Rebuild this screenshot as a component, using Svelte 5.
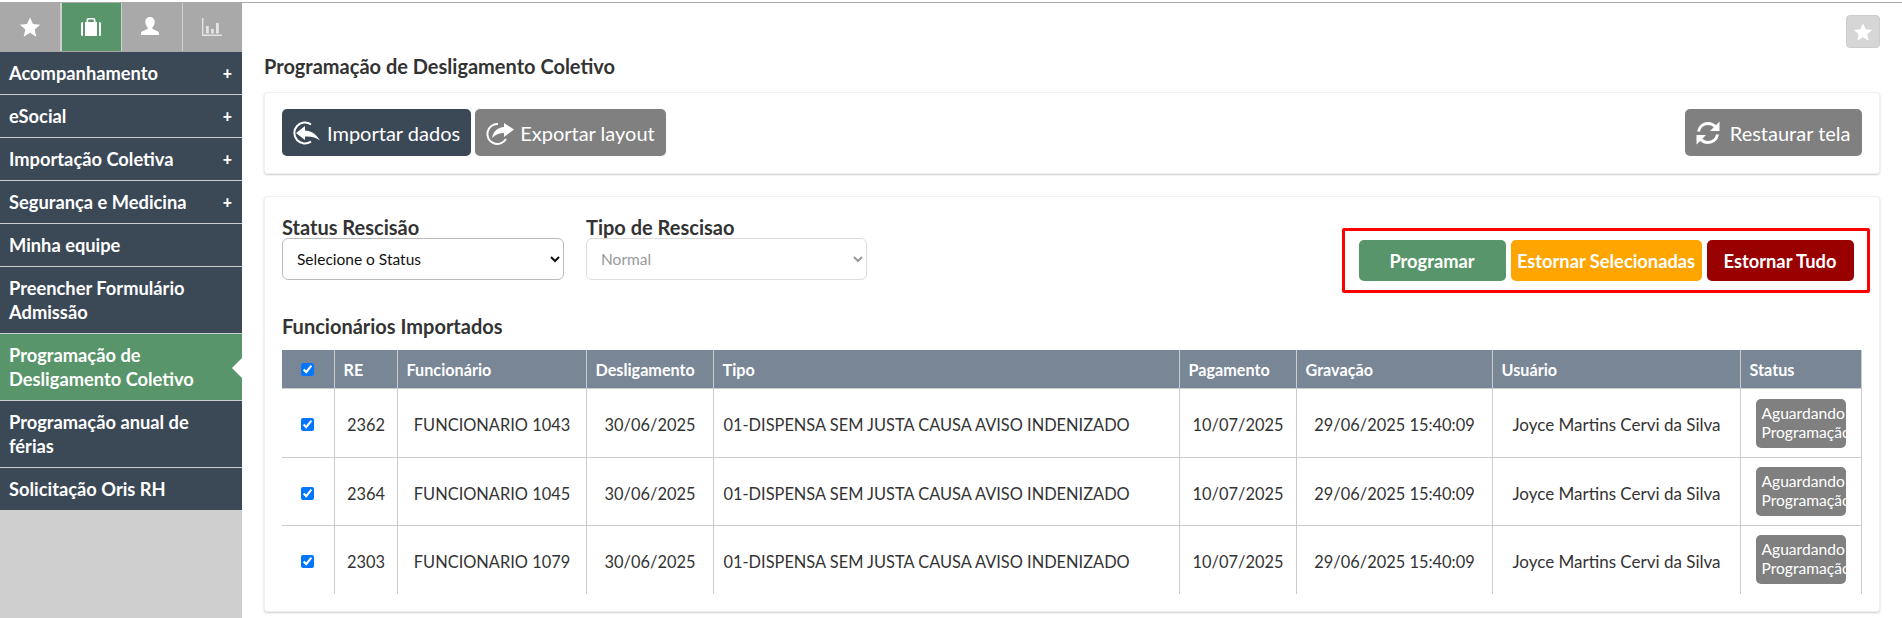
<script>
const tabs = [
  { id: 'star', active: false },
  { id: 'case', active: true },
  { id: 'user', active: false },
  { id: 'chart', active: false }
];

const menu = [
  { label: 'Acompanhamento', plus: true },
  { label: 'eSocial', plus: true },
  { label: 'Importação Coletiva', plus: true },
  { label: 'Segurança e Medicina', plus: true },
  { label: 'Minha equipe' },
  { label: 'Preencher Formulário Admissão' },
  { label: 'Programação de Desligamento Coletivo', active: true },
  { label: 'Programação anual de férias' },
  { label: 'Solicitação Oris RH' }
];

const rows = [
  { re: '2362', nome: 'FUNCIONARIO 1043' },
  { re: '2364', nome: 'FUNCIONARIO 1045' },
  { re: '2303', nome: 'FUNCIONARIO 1079' }
];
</script>

{#snippet star(size)}
  <svg width={size} height={size} viewBox="0 0 24 24"><path fill="#fff" d="M12 1.5l3.2 7.2 7.8.8-5.9 5.2 1.8 7.800-6.900-4.100-6.900 4.100 1.800-7.800L1 9.500l7.800-.8z"/></svg>
{/snippet}

<div class="topline"></div>
<div class="page">
  <aside class="sidebar">
    <div class="tabs">
      {#each tabs as tab}
        <div class="tab" class:on={tab.active}>
          {#if tab.id == 'star'}
            {@render star(22)}
          {:else if tab.id == 'case'}
            <svg width="22" height="22" viewBox="0 0 22 22"><path fill="#fff" d="M1 7.500q0-1.500 1.500-1.500H3v14h-.5Q1 20 1 18.500zM5 6h1.500V4q0-2 2-2h5q2 0 2 2v2H17v14H5zm3.200 0h5.600V4.200q0-.6-.6-.6H8.800q-.6 0-.6.6zM19 6h.5Q21 6 21 7.500v11q0 1.500-1.500 1.500H19z"/></svg>
          {:else if tab.id == 'user'}
            <svg class="user" width="24" height="22" viewBox="0 0 22 22"><path fill="#fff" d="M11 1c3 0 4.700 2.200 4.700 5 0 2.200-.9 4.300-2.200 5.300-.5.500-.3 1.500.5 1.900l5 2.300c1 .5 1 1.500 1 3.500H2c0-2 0-3 1-3.500l5-2.300c.8-.4 1-1.400.5-1.900C7.200 10.300 6.300 8.200 6.300 6 6.300 3.200 8 1 11 1z"/></svg>
          {:else}
            <svg width="22" height="22" viewBox="0 0 22 22"><path fill="#e4e4e4" d="M1 2h1.400v16.600H21V20H1zM5 10h2.800v7.500H5zM10 13h2.800v4.500H10zM15 7h2.800v10.500H15z"/></svg>
          {/if}
        </div>
      {/each}
    </div>
    <nav class="menu">
      {#each menu as item}
        <div class="item" class:active={item.active} class:wrap={!item.plus}>
          <span>{item.label}</span>
          {#if item.plus}<b class="plus">+</b>{/if}
          {#if item.active}<i class="arrow"></i>{/if}
        </div>
      {/each}
    </nav>
  </aside>

  <main class="content">
    <button class="fav" type="button">{@render star(20)}</button>
    <h1>Programação de Desligamento Coletivo</h1>

    <section class="card actions">
      <button class="btn dark" type="button">
        <svg width="30" height="26" viewBox="0 0 30 26"><path fill="none" stroke="#fff" stroke-width="2" d="M19 21.500A10.500 10.500 0 1 1 19 4.500"/><path fill="#fff" d="M4 13l9-7v4.500c6 0 11 3.500 15 10-4-3-9-4.500-15-4V20z"/></svg>
        Importar dados
      </button>
      <button class="btn gray" type="button">
        <svg width="30" height="26" viewBox="0 0 30 26"><path fill="none" stroke="#fff" stroke-width="2" d="M13 4a10 10 0 1 0 8 15"/><path fill="#fff" d="M29 9.500L19 3v4C13 7.500 8.500 11 7 18c3.500-3.500 7-5 12-5v4z"/></svg>
        Exportar layout
      </button>
      <button class="btn gray right" type="button">
        <svg width="26" height="26" viewBox="0 0 26 26"><path fill="none" stroke="#fff" stroke-width="3" d="M3.500 11.500C4.500 6.500 8.500 3.500 13 3.500c3.500 0 6 1.500 8 4M22.500 14.500c-1 5-5 8-9.500 8-3.500 0-6-1.500-8-4"/><path fill="#fff" d="M24.500 1.500V11h-9.500zM1.500 24.500V15h9.500z"/></svg>
        Restaurar tela
      </button>
    </section>

    <section class="card filters">
      <div class="filter-row">
        <div class="field">
          <label for="status">Status Rescisão</label>
          <select id="status">
            <option>Selecione o Status</option>
          </select>
        </div>
        <div class="field">
          <label for="tipo">Tipo de Rescisao</label>
          <select id="tipo" disabled>
            <option>Normal</option>
          </select>
        </div>
        <div class="highlight">
          <button class="act green" type="button">Programar</button>
          <button class="act orange" type="button">Estornar Selecionadas</button>
          <button class="act red" type="button">Estornar Tudo</button>
        </div>
      </div>

      <h2>Funcionários Importados</h2>

      <table>
        <colgroup>
          <col style="width:52px" />
          <col style="width:63px" />
          <col style="width:189px" />
          <col style="width:127px" />
          <col style="width:466px" />
          <col style="width:117px" />
          <col style="width:196px" />
          <col style="width:248px" />
          <col style="width:121px" />
        </colgroup>
        <thead>
          <tr>
            <th class="check"><input type="checkbox" checked /></th>
            <th>RE</th>
            <th>Funcionário</th>
            <th>Desligamento</th>
            <th>Tipo</th>
            <th>Pagamento</th>
            <th>Gravação</th>
            <th>Usuário</th>
            <th>Status</th>
          </tr>
        </thead>
        <tbody>
          {#each rows as row}
            <tr>
              <td class="check"><input type="checkbox" checked /></td>
              <td class="mid">{row.re}</td>
              <td class="mid">{row.nome}</td>
              <td class="mid">30/06/2025</td>
              <td>01-DISPENSA SEM JUSTA CAUSA AVISO INDENIZADO</td>
              <td class="mid">10/07/2025</td>
              <td class="mid">29/06/2025 15:40:09</td>
              <td class="mid usuario">Joyce Martins Cervi da Silva</td>
              <td class="mid"><span class="badge">Aguardando Programação</span></td>
            </tr>
          {/each}
        </tbody>
      </table>
    </section>
  </main>
</div>

<style>
  :global(body) {
    background: #fff;
    font-family: "Lato", "Open Sans", sans-serif;
    color: #333;
  }
  .topline {
    height: 3px;
    box-sizing: border-box;
    border-bottom: 1px solid #aaa;
  }
  .page {
    display: flex;
    height: 615px;
    overflow: hidden;
  }
  .sidebar {
    width: 242px;
    flex: none;
    background: #cfcfcf;
  }
  .tabs {
    display: flex;
    height: 49px;
    background: #a9a9a9;
  }
  .tab {
    flex: 1;
    display: flex;
    align-items: center;
    justify-content: center;
    border-right: 1px solid #d0d0d0;
    height: 48px;
  }
  .tab:last-child {
    border-right: none;
  }
  .tab.on {
    background: #58956a;
    border-left: 1px solid #d0d0d0;
  }
  .user {
    margin-right: 4px;
  }
  .item {
    position: relative;
    display: flex;
    justify-content: space-between;
    align-items: center;
    box-sizing: border-box;
    min-height: 43px;
    padding: 9px;
    background: #3b4856;
    color: #fff;
    font-size: 18.300px;
    font-weight: 700;
    line-height: 24px;
    border-bottom: 1px solid #ccc;
  }
  .item.wrap {
    padding-right: 24px;
  }
  .item:last-child {
    min-height: 42px;
    border-bottom: none;
  }
  .item.active {
    background: #58956a;
  }
  .plus {
    margin-right: 1px;
    font-size: 16px;
  }
  .arrow {
    position: absolute;
    right: 0;
    top: 24px;
    border: 10px solid transparent;
    border-right-color: #fff;
    border-left-width: 0;
  }
  .content {
    position: relative;
    flex: 1;
    padding: 0 23px 0 22px;
  }
  .fav {
    position: absolute;
    top: 12px;
    right: 23px;
    width: 34px;
    height: 33px;
    padding: 0;
    display: flex;
    align-items: center;
    justify-content: center;
    background: #d6d6d6;
    border: 1px solid #ccc;
    border-radius: 4px;
  }
  h1 {
    margin: 0;
    padding: 53px 0 0 0;
    height: 36px;
    font-size: 20px;
    font-weight: 700;
    line-height: 20px;
    color: #333;
  }
  .card {
    background: #fff;
    border: 1px solid #f0f0f0;
    border-radius: 3px;
    box-shadow: 0 1px 2px rgba(0, 0, 0, 0.2);
  }
  .actions {
    display: flex;
    gap: 4px;
    box-sizing: border-box;
    height: 82px;
    padding: 16px 17px;
  }
  .btn {
    display: flex;
    align-items: center;
    gap: 5px;
    height: 47px;
    padding: 0 11px 0 10px;
    border: none;
    border-radius: 5px;
    color: #fff;
    font: inherit;
    font-size: 20px;
  }
  .btn.dark {
    background: #3b4856;
  }
  .btn.gray {
    background: #808080;
  }
  .btn.right {
    margin-left: auto;
    gap: 9px;
  }
  .filters {
    box-sizing: border-box;
    margin-top: 22px;
    height: 416px;
    padding: 19px 17px 0;
  }
  .filter-row {
    display: flex;
    gap: 22px;
    align-items: flex-start;
  }
  .field {
    width: 282px;
    display: flex;
    flex-direction: column;
  }
  .field + .field {
    width: 281px;
  }
  label {
    font-size: 20px;
    font-weight: 700;
    line-height: 22px;
  }
  select {
    height: 42px;
    padding: 0 10px;
    border: 1px solid #bbb;
    border-radius: 6px;
    background-color: #fff;
    color: #111;
    font: inherit;
    font-size: 15.500px;
  }
  select:disabled {
    border-color: #ddd;
    color: #999;
    opacity: 1;
  }
  .highlight {
    display: flex;
    gap: 5px;
    margin: 12px -8px 0 auto;
    padding: 9px 13px 9px 14px;
    border: 3px solid #f00;
    border-radius: 2px;
  }
  .act {
    height: 41px;
    width: 147px;
    padding: 0;
    border: none;
    border-radius: 5px;
    color: #fff;
    font: inherit;
    font-size: 18.300px;
    font-weight: 700;
  }
  .act.orange {
    width: 191px;
    background: #ffa500;
  }
  .act.green {
    background: #58956a;
  }
  .act.red {
    background: #990000;
  }
  h2 {
    margin: 22px 0 13px;
    font-size: 20px;
    font-weight: 700;
    line-height: 22px;
    color: #333;
  }
  table {
    width: 1579px;
    table-layout: fixed;
    border-collapse: collapse;
    font-size: 16.400px;
  }
  th {
    height: 38px;
    padding: 0 9px;
    background: #788696;
    color: #fff;
    font-size: 16.200px;
    font-weight: 700;
    text-align: left;
    border-right: 1px solid #ccc;
    border-bottom: 1px solid #ccc;
  }
  td {
    height: 68px;
    padding: 3px 9px 0 10px;
    box-sizing: border-box;
    color: #333;
    border-right: 1px solid #ccc;
    border-bottom: 1px solid #ccc;
    white-space: nowrap;
  }
  tbody tr:first-child td {
    height: 69px;
  }
  tbody tr:last-child td {
    border-bottom: none;
  }
  .mid {
    text-align: center;
  }
  .usuario {
    font-size: 17px;
  }
  .check {
    text-align: center;
    padding: 0;
  }
  input[type="checkbox"] {
    width: 13px;
    height: 13px;
    margin: -3px 0 0;
    vertical-align: middle;
  }
  td input[type="checkbox"] {
    margin-top: -1px;
  }
  .badge {
    display: block;
    box-sizing: border-box;
    width: 90px;
    height: 49px;
    margin: -3px auto 0 5px;
    padding: 5px 0 5px 6px;
    overflow: hidden;
    border-radius: 5px;
    background: #808080;
    color: #fff;
    font-size: 15.600px;
    line-height: 19px;
    text-align: left;
    white-space: normal;
  }
</style>
